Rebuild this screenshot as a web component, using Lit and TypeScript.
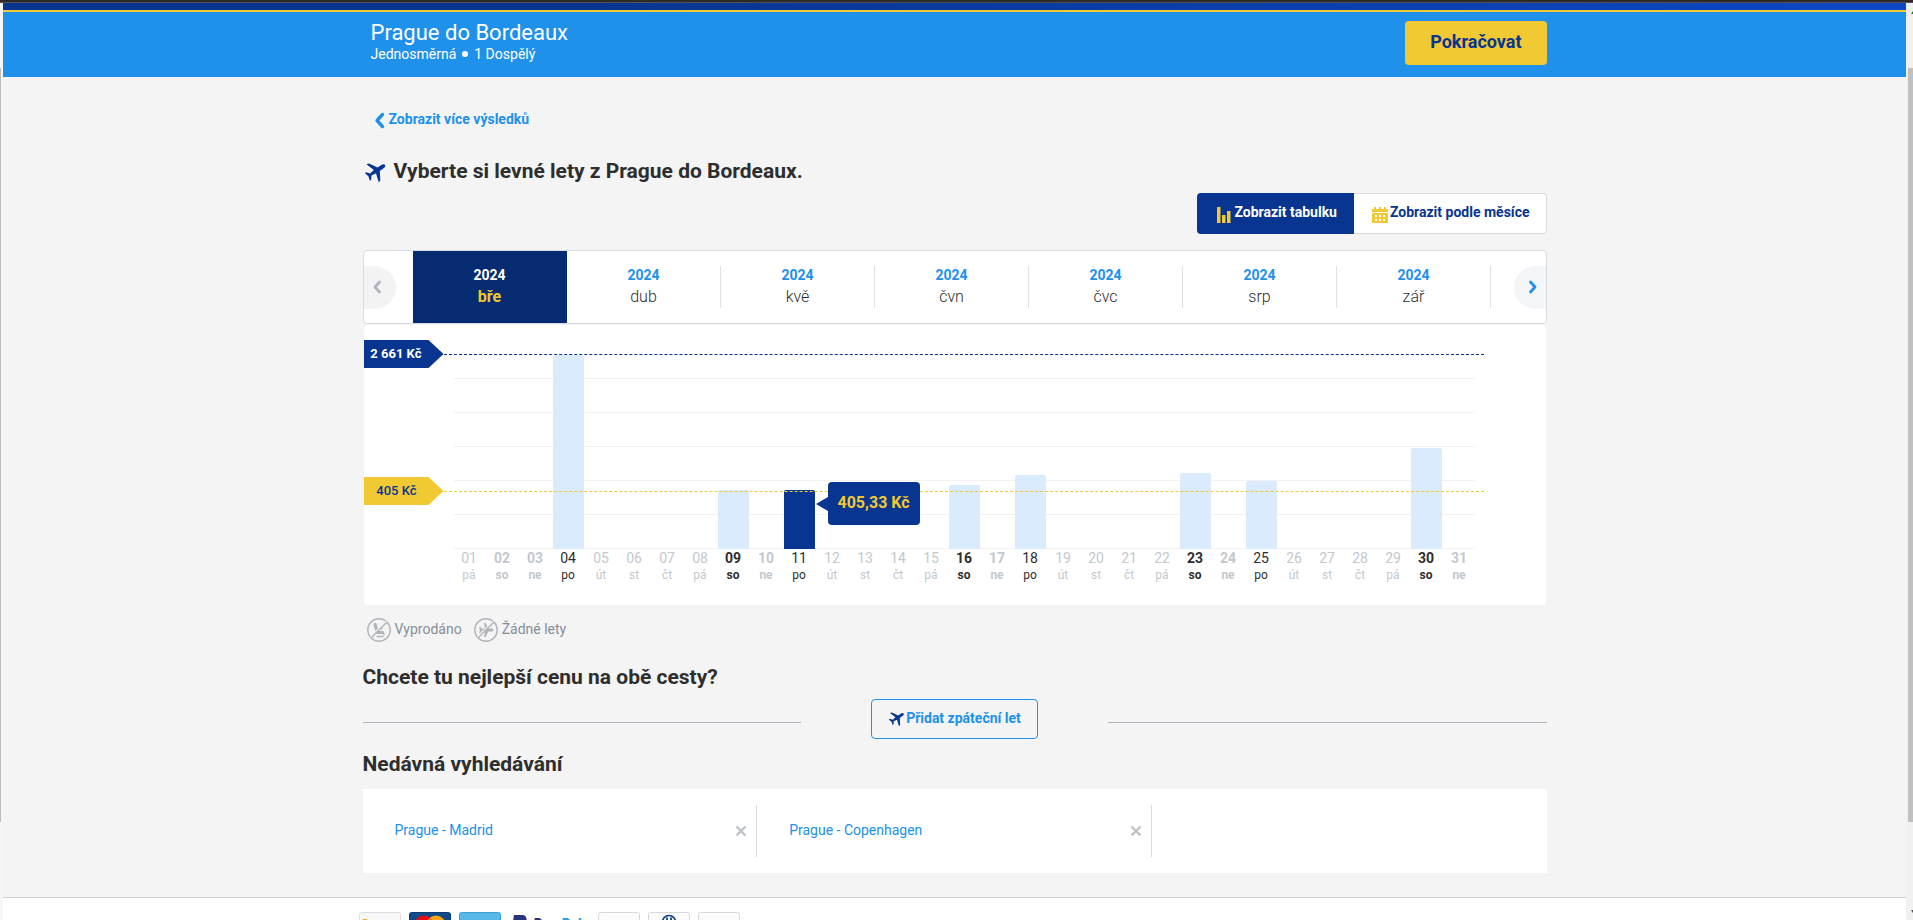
import { LitElement, html, svg, css } from "lit";
import { customElement, property, state } from "lit/decorators.js";
import { classMap } from "lit/directives/class-map.js";
import { styleMap } from "lit/directives/style-map.js";

const plane = html`<svg class="plane" viewBox="0 0 24 24" aria-hidden="true">
  <g transform="rotate(56 12 12)">
    <path
      fill="#073590"
      d="M24 16.500l-1-2.800L14.200 8.500V3c0-1.500-1-2.900-2.200-2.900S9.800 1.500 9.800 3v5.500L1 13.700l-1 2.800 9.900-3.100.8 5.400-3.700 2.900v1.700l5-1.400 5 1.400v-1.700l-3.700-2.900.8-5.400z"
    />
  </g>
</svg>`;

const chevron = (dir: "left" | "right") => html`<svg class="chevron" viewBox="0 0 10 14" aria-hidden="true">
  <path
    d=${dir === "left" ? "M7.500 2 3 7l4.500 5" : "M2.500 2 7 7l-4.500 5"}
    fill="none"
    stroke="currentColor"
    stroke-width="2.800"
    stroke-linecap="round"
    stroke-linejoin="round"
  />
</svg>`;

const DOW = ["pá", "so", "ne", "po", "út", "st", "čt"];

// Bar heights as a share of the plot height, keyed by day of the month.
const FARES: Record<number, number> = {
  4: 100,
  9: 30.4,
  11: 30.4,
  16: 33,
  18: 38.1,
  23: 39.2,
  25: 35,
  30: 52,
};

@customElement("fare-chart")
class FareChart extends LitElement {
  static styles = css`
    :host {
      display: block;
      background: #fff;
      border-radius: 4px;
      margin: 1px 1px 0;
      padding: 30px 71px 22px 90px;
      position: relative;
    }
    .plot {
      position: relative;
      height: 194px;
      background: repeating-linear-gradient(to top, #f1f1f1 0 1px, transparent 1px 34px);
    }
    .columns,
    .labels {
      display: grid;
      grid-template-columns: repeat(31, 1fr);
      column-gap: 2px;
    }
    .columns {
      height: 100%;
      align-items: end;
    }
    .slot {
      height: 100%;
      display: flex;
      align-items: flex-end;
      position: relative;
    }
    .bar {
      width: 100%;
      padding: 0;
      border: 0;
      border-radius: 2px 2px 0 0;
      background: #dbebfe;
      cursor: pointer;
    }
    .bar.selected {
      background: #073590;
    }
    .labels {
      text-align: center;
      color: #c3c8ce;
      white-space: nowrap;
    }
    .num {
      font-size: 14px;
      line-height: 18px;
    }
    .dow {
      font-size: 12px;
      line-height: 16px;
    }
    .weekend {
      font-weight: 700;
    }
    .open {
      color: #2e2e2e;
    }
    .level {
      position: absolute;
      left: -90px;
      right: -9px;
      display: flex;
      align-items: center;
      pointer-events: none;
    }
    .level.max {
      top: -15px;
      color: #073590;
    }
    .level.min {
      bottom: 44px;
      color: #f1c933;
    }
    .flag {
      box-sizing: border-box;
      width: 80px;
      height: 28px;
      padding-right: 27px;
      display: flex;
      align-items: center;
      justify-content: flex-end;
      white-space: nowrap;
      background: currentColor;
      clip-path: polygon(0 0, 65px 0, 100% 50%, 65px 100%, 0 100%);
      font-size: 13px;
      line-height: 18px;
      font-weight: 700;
    }
    .flag span {
      color: #fff;
    }
    .max .flag {
      padding-right: 22px;
    }
    .min .flag span {
      color: #073590;
      font-weight: 500;
    }
    .dash {
      flex: 1;
      border-top: 1px dashed currentColor;
    }
    .tip {
      position: absolute;
      left: calc(100% + 13px);
      bottom: 24px;
      z-index: 2;
      box-sizing: border-box;
      height: 43px;
      padding: 0 10px;
      background: #073590;
      color: #f1c933;
      border-radius: 4px;
      font-size: 16px;
      line-height: 42px;
      font-weight: 700;
      white-space: nowrap;
    }
    .tip::before {
      content: "";
      position: absolute;
      left: -12px;
      top: 15px;
      border: 7px solid transparent;
      border-left-width: 0;
      border-right: 12px solid #073590;
    }
  `;

  @property({ type: Number }) selected = 11;

  render() {
    const days = Array.from({ length: 31 }, (_, i) => i + 1);
    return html`
      <div class="plot">
        <div class="columns">
          ${days.map((d) =>
            FARES[d]
              ? html`<div class="slot">
                  <button
                    class=${classMap({ bar: true, selected: d === this.selected })}
                    style=${styleMap({ height: `${FARES[d]}%` })}
                    aria-label=${`${d}. 3. 2024`}
                    @click=${() => (this.selected = d)}
                  ></button>
                  ${d === this.selected ? html`<div class="tip">405,33 Kč</div>` : ""}
                </div>`
              : html`<div class="slot"></div>`
          )}
        </div>
        <div class="level max"><div class="flag"><span>2 661 Kč</span></div><div class="dash"></div></div>
        <div class="level min"><div class="flag"><span>405 Kč</span></div><div class="dash"></div></div>
      </div>
      <div class="labels">
        ${days.map((d) => {
          const dow = DOW[(d - 1) % 7];
          return html`<div class=${classMap({ weekend: dow === "so" || dow === "ne", open: !!FARES[d] })}>
            <div class="num">${String(d).padStart(2, "0")}</div>
            <div class="dow">${dow}</div>
          </div>`;
        })}
      </div>
    `;
  }
}

@customElement("payment-cards")
class PaymentCards extends LitElement {
  static styles = css`
    :host {
      display: flex;
      gap: 8px;
      margin-left: -4px;
    }
    svg {
      display: block;
      height: 28px;
    }
    text {
      font-family: Roboto, "Liberation Sans", sans-serif;
    }
  `;

  private card(fill: string, edge: string, art: unknown) {
    return html`<svg width="42" viewBox="0 0 42 28" aria-hidden="true">
      <rect x=".5" y=".5" width="41" height="27" rx="2" fill=${fill} stroke=${edge} />
      ${art}
    </svg>`;
  }

  render() {
    return html`
      ${this.card("#f7f7f7", "#dcdcdc", svg`<path d="M3 7h5l2 5z" fill="#f0a83a" /><text x="9" y="17" font-size="13" font-weight="900" font-style="italic" fill="#27357c">VISA</text>`)}
      ${this.card("#0f4a8a", "#0b3c74", svg`<circle cx="15" cy="13" r="9.500" fill="#eb0a14" /><circle cx="27" cy="13" r="9.500" fill="#f9a51a" /><path d="M21 5.600a9.500 9.500 0 0 1 0 14.800 9.500 9.500 0 0 1 0-14.800z" fill="#f26a1b" />`)}
      ${this.card("#58b9e8", "#3aa0d6", svg`<text x="4" y="13" font-size="7" font-weight="700" fill="#8fd2f2">AMERICAN</text>`)}
      <svg width="81" viewBox="0 0 81 28" aria-hidden="true">
        <path d="M5 3h8c3.500 0 5 2.500 4.500 6-1 5-4 6-7.500 6H8l-1 6H2z" fill="#28357c" />
        <text x="24" y="17" font-size="14" font-weight="900" font-style="italic" fill="#27357c">Pay</text>
        <text x="52" y="17" font-size="14" font-weight="900" font-style="italic" fill="#2f9fd8">Pal</text>
      </svg>
      ${this.card("#fbfbfb", "#d8d8d8", svg`<text x="3" y="13" font-size="7" font-weight="700" fill="#e6e6e6">DISCOVER</text>`)}
      ${this.card("#fbfbfb", "#d8d8d8", svg`<circle cx="21" cy="10" r="6.500" fill="#fff" stroke="#0d3f94" stroke-width="1.600" /><path d="M19 5.500v9M23 5.500v9" stroke="#0d3f94" stroke-width="1.800" />`)}
      ${this.card("#fbfbfb", "#d8d8d8", "")}
    `;
  }
}

@customElement("app-root")
class AppRoot extends LitElement {
  static styles = css`
    :host {
      display: flex;
      flex-direction: column;
      height: 100vh;
      overflow: hidden;
      font-family: Roboto, "Liberation Sans", sans-serif;
      color: #2e2e2e;
      background: #f4f4f4;
    }
    button {
      font-family: inherit;
      cursor: pointer;
    }
    a {
      color: #2091eb;
      text-decoration: none;
    }
    .strip {
      height: 2px;
      flex: none;
      background: #2b2b2b;
      border-bottom: 1px solid #57504f;
    }
    .frame {
      flex: 1;
      min-height: 0;
      display: grid;
      grid-template-columns: 3px minmax(0, 1fr) 7px;
      grid-template-rows: minmax(0, 1fr);
    }
    .edge,
    .scroll {
      display: grid;
      grid-template-rows: 65px 754fr 98fr;
      background: #f6f6f6;
    }
    .edge i {
      grid-row: 2;
      width: 1px;
      background: #bcbcbc;
    }
    .scroll {
      background: #f0f0f0;
      justify-items: end;
    }
    .scroll i {
      width: 5px;
      background: #c1c1c1;
    }
    .scroll svg {
      width: 2px;
      height: 3px;
      margin-top: 8px;
    }
    .scroll svg:last-child {
      margin-top: 88px;
    }
    .page {
      display: flex;
      flex-direction: column;
      min-height: 0;
    }
    header,
    main {
      flex: none;
    }
    .wrap {
      width: 100%;
      max-width: 1184px;
      margin: 0 auto;
    }
    .topbar {
      height: 7px;
      flex: none;
      background: linear-gradient(90deg, #073590 30%, #0d47c5);
      border-bottom: 2px solid #f1c933;
    }
    header {
      background: #2091eb;
      color: #fff;
    }
    header .wrap {
      display: flex;
      justify-content: space-between;
      align-items: flex-start;
    }
    .route {
      padding: 8px 8px 15px;
    }
    .route h1 {
      margin: 0;
      font-size: 22px;
      line-height: 26px;
      font-weight: 400;
    }
    .route p {
      margin: 0;
      display: flex;
      align-items: center;
      gap: 6px;
      font-size: 14px;
      line-height: 16px;
    }
    .route i {
      width: 6px;
      height: 6px;
      border-radius: 50%;
      background: #fff;
    }
    .go {
      margin-top: 9px;
      height: 44px;
      padding: 0 25px 4px;
      border: 0;
      border-radius: 4px;
      background: #f1c933;
      color: #073590;
      font-size: 18px;
      font-weight: 700;
    }
    .back {
      display: flex;
      align-items: center;
      gap: 3px;
      width: fit-content;
      margin: 32px 0 0 10px;
      font-size: 14px;
      line-height: 20px;
      font-weight: 700;
    }
    .chevron {
      display: block;
      width: 10px;
      height: 14px;
    }
    .back .chevron {
      width: 13px;
      height: 17px;
      margin-top: 3px;
    }
    h2 {
      margin: 0;
      font-size: 21px;
      line-height: 28px;
      font-weight: 700;
    }
    .plane {
      display: block;
      width: 22px;
      height: 22px;
    }
    .title {
      display: flex;
      align-items: center;
      gap: 7px;
      margin: 28px 0 0 2px;
    }
    .toggle {
      display: flex;
      width: fit-content;
      margin: 8px 0 0 auto;
    }
    .toggle button {
      box-sizing: border-box;
      height: 41px;
      display: flex;
      align-items: center;
      gap: 2px;
      border: 1px solid #d8dbe2;
      border-left: 0;
      border-radius: 0 4px 4px 0;
      padding: 0 16px 4px 18px;
      background: #fff;
      color: #073590;
      font-size: 14px;
      line-height: 20px;
      font-weight: 700;
    }
    .toggle button.on {
      border: 0;
      border-radius: 4px 0 0 4px;
      padding: 0 17px 4px 19px;
      background: #073590;
      color: #fff;
    }
    .toggle svg {
      width: 16px;
      height: 16px;
      margin-top: 6px;
    }
    .months {
      display: flex;
      align-items: center;
      justify-content: space-between;
      box-sizing: border-box;
      height: 74px;
      margin-top: 16px;
      border: 1px solid #d8dbe2;
      border-radius: 4px;
      background: #fff;
    }
    .list {
      flex: 1;
      display: grid;
      grid-template-columns: repeat(7, 1fr);
      margin: 0 23px 0 17px;
    }
    .month {
      position: relative;
      height: 72px;
      padding: 0;
      border: 0;
      background: none;
      font-size: 16px;
      line-height: 24px;
      font-weight: 300;
      color: #2e2e2e;
    }
    .month::after {
      content: "";
      position: absolute;
      right: 0;
      top: 15px;
      bottom: 15px;
      width: 1px;
      background: #dfe1e6;
    }
    .month b {
      display: block;
      font-size: 14px;
      line-height: 20px;
      font-weight: 700;
      color: #2091eb;
    }
    .month.on {
      background: #062b70;
      color: #f1c933;
      font-weight: 700;
    }
    .month.on::after {
      display: none;
    }
    .month.on b {
      color: #fff;
    }
    .nav {
      width: 32px;
      height: 43px;
      padding: 0 8px;
      border: 0;
      background: #f3f3f3;
      color: #b0b5c0;
      border-radius: 0 22px 22px 0;
    }
    .nav.next {
      padding: 0 14px;
      border-radius: 22px 0 0 22px;
      background: #f4f5f8;
      color: #2091eb;
    }
    .legend {
      display: flex;
      align-items: flex-start;
      gap: 12px;
      margin: 13px 0 0 4px;
      color: #868e9a;
      font-size: 14px;
      line-height: 22px;
    }
    .legend span {
      display: flex;
      gap: 4px;
    }
    .legend svg {
      width: 24px;
      height: 24px;
    }
    .return {
      margin-top: 21px;
    }
    .add-row {
      display: grid;
      grid-template-columns: 37fr 26fr 37fr;
      align-items: center;
      margin-top: 8px;
    }
    .rule {
      height: 1px;
      margin-top: 6px;
      background: #b2b4c2;
    }
    .add {
      box-sizing: border-box;
      height: 40px;
      justify-self: center;
      display: flex;
      align-items: center;
      gap: 1px;
      padding: 0 16px 2px 17px;
      border: 1px solid #2091eb;
      border-radius: 4px;
      background: none;
      color: #2091eb;
      font-size: 14px;
      line-height: 20px;
      font-weight: 700;
    }
    .add .plane {
      width: 16px;
      height: 16px;
    }
    .recent {
      margin: 11px 0;
    }
    .searches {
      display: grid;
      grid-template-columns: repeat(3, 1fr);
      height: 52px;
      padding: 16px 0;
      background: #fff;
    }
    .search {
      display: flex;
      align-items: center;
      justify-content: space-between;
      padding: 0 9px 0 32px;
      border-right: 1px solid #d8dade;
      font-size: 14px;
      line-height: 20px;
    }
    .search a {
      padding-bottom: 2px;
    }
    .search button {
      padding: 0;
      border: 0;
      background: none;
    }
    .search svg {
      display: block;
      width: 12px;
      height: 12px;
    }
    footer {
      flex: 1;
      min-height: 0;
      margin-top: 24px;
      padding-top: 14px;
      border-top: 1px solid #cfcfcf;
      background: #fff;
    }
  `;

  @state() private month = 0;

  render() {
    const months = ["bře", "dub", "kvě", "čvn", "čvc", "srp", "zář"];
    const searches = ["Prague - Madrid", "Prague - Copenhagen"];
    return html`
      <div class="strip"></div>
      <div class="frame">
        <div class="edge"><i></i></div>
        <div class="page">
          <div class="topbar"></div>
          <header>
            <div class="wrap">
              <div class="route">
                <h1>Prague do Bordeaux</h1>
                <p>Jednosměrná <i></i> 1 Dospělý</p>
              </div>
              <button class="go">Pokračovat</button>
            </div>
          </header>
          <main class="wrap">
            <a class="back" href="#">${chevron("left")}Zobrazit více výsledků</a>
            <h2 class="title">${plane}Vyberte si levné lety z Prague do Bordeaux.</h2>
            <div class="toggle">
              <button class="on">
                <svg viewBox="0 0 16 16" aria-hidden="true">
                  <path fill="#f1c933" d="M1 0h3.500v16H1zM6 8h3.500v8H6zM11 4h3.500v12H11z" /></svg
                >Zobrazit tabulku
              </button>
              <button>
                <svg viewBox="0 0 16 16" aria-hidden="true">
                  <path
                    fill="#f1c933"
                    fill-rule="evenodd"
                    d="M0 2h2V0h2v2h3V0h2v2h3V0h2v2h2v3H0zM0 6h16v10H0zM3 8v2h2V8zm4 0v2h2V8zm4 0v2h2V8zm-8 4v2h2v-2zm4 0v2h2v-2zm4 0v2h2v-2z"
                  /></svg
                >Zobrazit podle měsíce
              </button>
            </div>
            <nav class="months">
              <button class="nav" aria-label="Předchozí">${chevron("left")}</button>
              <div class="list">
                ${months.map(
                  (m, i) => html`<button
                    class=${classMap({ month: true, on: i === this.month })}
                    @click=${() => (this.month = i)}
                  >
                    <b>2024</b>${m}
                  </button>`
                )}
              </div>
              <button class="nav next" aria-label="Další">${chevron("right")}</button>
            </nav>
            <fare-chart></fare-chart>
            <div class="legend">
              <span
                ><svg viewBox="0 0 24 24" fill="none" stroke="#b2b4bc" aria-hidden="true">
                  <circle cx="12" cy="12" r="11.200" stroke-width="1.400" />
                  <path d="M8 6.500l2.500 8h5" stroke-width="3.200" stroke-linejoin="round" stroke-linecap="round" />
                  <path d="M12 10.500h3.500M9.500 18.500h7M16 15l1.500 2" stroke-width="1.500" />
                  <path d="M19.400 3L3.400 19" stroke="#f4f4f4" stroke-width="1.400" />
                  <path d="M20 4L4 20" stroke-width="1.500" /></svg
                >Vyprodáno</span
              >
              <span
                ><svg viewBox="0 0 24 24" fill="none" stroke="#b2b4bc" aria-hidden="true">
                  <circle cx="12" cy="12" r="11.200" stroke-width="1.400" />
                  <path
                    fill="#b2b4bc"
                    stroke="none"
                    d="M19.500 12c0 .8-1 1.400-2 1.400h-3.200l-2.600 5.600h-1.700l1-5.600-3.300-.2-1.300 2H5.200l.6-3.200-.6-3.200h1.200l1.300 2 3.300-.2-1-5.600h1.700l2.600 5.600h3.200c1 0 2 .6 2 1.400z"
                  />
                  <path d="M19.400 3L3.400 19" stroke="#f4f4f4" stroke-width="1.200" />
                  <path d="M20 4L4 20" stroke-width="1.500" /></svg
                >Žádné lety</span
              >
            </div>
            <h2 class="return">Chcete tu nejlepší cenu na obě cesty?</h2>
            <div class="add-row">
              <div class="rule"></div>
              <button class="add">${plane}Přidat zpáteční let</button>
              <div class="rule"></div>
            </div>
            <h2 class="recent">Nedávná vyhledávání</h2>
            <div class="searches">
              ${searches.map(
                (s) => html`<div class="search">
                  <a href="#">${s}</a>
                  <button aria-label="Odstranit">
                    <svg viewBox="0 0 12 12" aria-hidden="true">
                      <path d="M1.500 1.500l9 9M10.500 1.500l-9 9" stroke="#bcc2c8" stroke-width="2.400" />
                    </svg>
                  </button>
                </div>`
              )}
            </div>
          </main>
          <footer>
            <div class="wrap"><payment-cards></payment-cards></div>
          </footer>
        </div>
        <div class="scroll">
          <svg viewBox="0 0 2 3" aria-hidden="true"><path d="M2 0v3H0z" fill="#505050" /></svg>
          <i></i>
          <svg viewBox="0 0 2 3" aria-hidden="true"><path d="M0 0h2v3z" fill="#505050" /></svg>
        </div>
      </div>
    `;
  }
}
